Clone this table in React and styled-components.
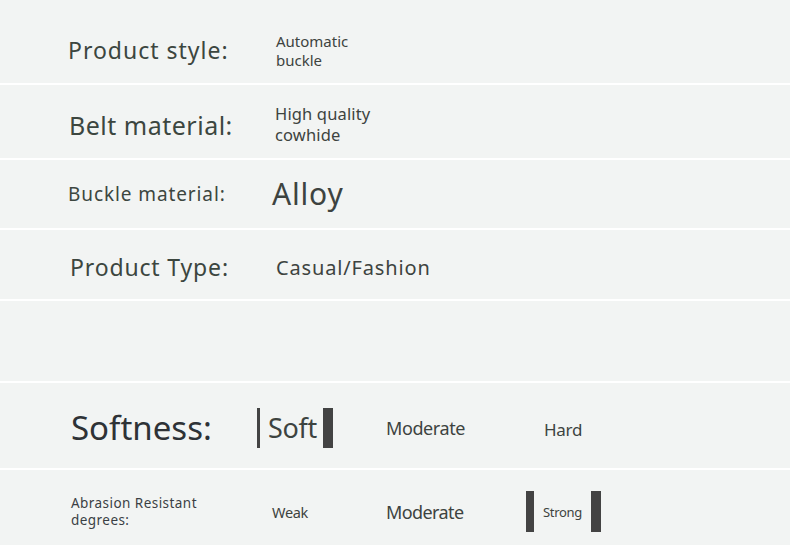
import React from 'react';
import styled, { createGlobalStyle } from 'styled-components';

const GlobalStyle = createGlobalStyle`
  body {
    margin: 0;
    background: #f2f4f3;
    font-family: "Noto Sans", "Open Sans", sans-serif;
  }
`;

const Page = styled.div`
  width: 790px;
  height: 547px;
  overflow: hidden;
  background: #f2f4f3;
  display: flex;
  flex-direction: column;
`;

const Row = styled.div`
  height: ${p => p.$h}px;
  padding-top: ${p => p.$top || 0}px;
  box-sizing: border-box;
  display: flex;
  align-items: center;
  border-bottom: 2px solid #ffffff;
  flex-shrink: 0;
`;

const Spacer = styled.div`
  height: 80px;
  border-bottom: 2px solid #ffffff;
  flex-shrink: 0;
`;

const Label = styled.div`
  width: ${p => p.$w || 204}px;
  padding-left: ${p => p.$x || 68}px;
  box-sizing: content-box;
  font-size: ${p => p.$size}px;
  line-height: 1.2;
  color: ${p => p.$color || '#3c463f'};
  letter-spacing: ${p => p.$ls || 0}px;
  flex-shrink: 0;
`;

const Value = styled.div`
  font-size: ${p => p.$size}px;
  line-height: ${p => p.$lh || 1.2};
  color: #3d4340;
  letter-spacing: ${p => p.$ls || 0}px;
`;

const Line = styled.div`
  display: block;
`;

const Scale = styled.div`
  display: grid;
  grid-template-columns: 129px ${p => p.$mid}px auto;
  align-items: center;
`;

const Option = styled.div`
  display: flex;
  align-items: center;
  padding-left: ${p => p.$indent || 0}px;
  padding-top: ${p => p.$drop || 0}px;
  font-size: ${p => p.$size}px;
  color: #3d4340;
  letter-spacing: ${p => p.$ls ?? -0.3}px;
`;

const Bar = styled.span`
  display: block;
  width: ${p => p.$w}px;
  height: ${p => p.$h}px;
  background: #434343;
`;

const OptionText = styled.span`
  padding: 0 ${p => p.$right}px 0 ${p => p.$left}px;
`;

export default function App() {
  return (
    <Page>
      <GlobalStyle />
      <Row $h={85} $top={18}>
        <Label $size={23} $w={208} $ls={1}>Product style:</Label>
        <Value $size={15} $lh={1.22}>
          <Line>Automatic</Line>
          <Line>buckle</Line>
        </Value>
      </Row>
      <Row $h={75} $top={6}>
        <Label $size={25} $x={69} $w={206} $ls={0.5}>Belt material:</Label>
        <Value $size={16.5} $lh={1.26} $ls={0.15}>
          <Line>High quality</Line>
          <Line>cowhide</Line>
        </Value>
      </Row>
      <Row $h={70}>
        <Label $size={19} $w={204} $ls={0.9}>Buckle material:</Label>
        <Value $size={30} $ls={0.8}>Alloy</Value>
      </Row>
      <Row $h={71} $top={6}>
        <Label $size={23} $x={70} $w={206} $ls={0.85}>Product Type:</Label>
        <Value $size={20} $ls={0.85}>Casual/Fashion</Value>
      </Row>
      <Spacer />
      <Row $h={87} $top={4}>
        <Label $size={33} $x={71} $w={186} $color="#2e3236">Softness:</Label>
        <Scale $mid={158}>
          <Option $size={27}>
            <Bar $w={3} $h={40} />
            <OptionText $left={8} $right={6}>Soft</OptionText>
            <Bar $w={10} $h={40} />
          </Option>
          <Option $size={18} $ls={-0.4}>Moderate</Option>
          <Option $size={17} $drop={4}>Hard</Option>
        </Scale>
      </Row>
      <Row $h={77} $top={8}>
        <Label $size={13.5} $x={71} $w={186} $color="#3a3f44" $ls={0.45}>
          <Line>Abrasion Resistant</Line>
          <Line>degrees:</Line>
        </Label>
        <Scale $mid={140}>
          <Option $size={14.5} $indent={15}>Weak</Option>
          <Option $size={18} $ls={-0.6}>Moderate</Option>
          <Option $size={13}>
            <Bar $w={8} $h={41} />
            <OptionText $left={9} $right={9}>Strong</OptionText>
            <Bar $w={10} $h={41} />
          </Option>
        </Scale>
      </Row>
    </Page>
  );
}
